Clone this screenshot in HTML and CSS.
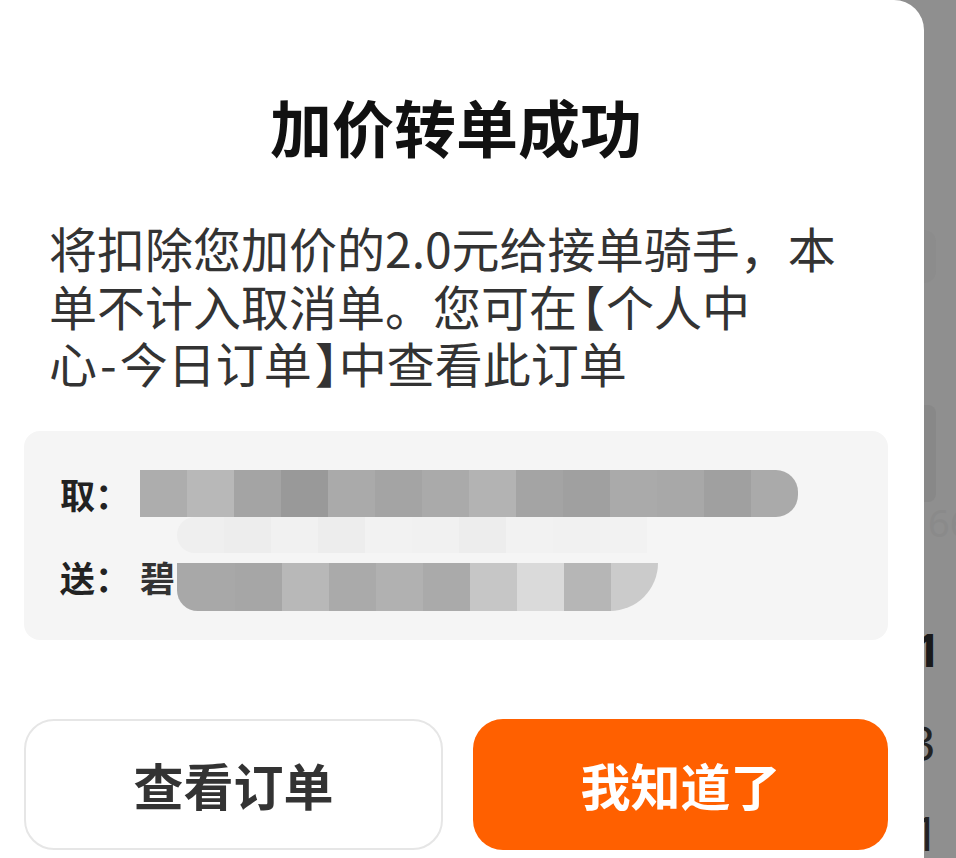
FILE: index.html
```html
<!DOCTYPE html>
<html lang="zh-CN">
<head>
<meta charset="utf-8">
<title>加价转单成功</title>
<link rel="stylesheet" href="styles.css">
</head>
<body>
<div class="screen">
  <div class="dialog">
    <h1 class="title">加价转单成功</h1>
    <p class="desc">将扣除您加价的2.0元给接单骑手，本<br>单不计入取消单。您可在<span class="open">【</span>个人中<br>心<span class="dash">-</span>今日订单<span class="close">】</span>中查看此订单</p>
    <div class="addr">
      <div class="row">
        <span class="label">取：</span>
        <div class="mosaic m1">
          <i class="g1"></i><i class="g2"></i><i class="g3"></i><i class="g4"></i><i class="g5"></i><i class="g3"></i><i class="g5"></i><i class="g6"></i><i class="g3"></i><i class="g7"></i><i class="g5"></i><i class="g8"></i><i class="g7"></i><i class="g5"></i>
        </div>
      </div>
      <div class="band">
        <i class="l1"></i><i class="l2"></i><i class="l3"></i><i class="l2"></i><i class="l4"></i><i class="l3"></i><i class="l2"></i><i class="l4"></i><i class="l3"></i><i class="l4"></i>
      </div>
      <div class="row">
        <span class="label">送：</span>
        <span class="first">碧</span>
        <div class="mosaic m2">
          <i class="wide g8"></i><i class="g9"></i><i class="g2"></i><i class="g5"></i><i class="g10"></i><i class="g5"></i><i class="g11"></i><i class="g12"></i><i class="g13"></i><i class="g14"></i>
        </div>
      </div>
    </div>
    <div class="actions">
      <button class="btn ghost">查看订单</button>
      <button class="btn primary">我知道了</button>
    </div>
  </div>
  <div class="backdrop">
    <div class="bd-circle"></div>
    <div class="bd-card"></div>
    <div class="bd-num faint">66</div>
    <div class="bd-num strong">1</div>
    <div class="bd-num thin three">3</div>
    <div class="bd-num thin one">1</div>
  </div>
</div>
</body>
</html>
```

FILE: styles.css
```css
html, body {
  margin: 0;
  padding: 0;
  height: 100%;
  overflow: hidden;
}
body {
  background: #8f8f8f;
  font-family: "Noto Sans CJK SC", "Noto Sans", sans-serif;
}
.screen {
  display: flex;
  height: 858px;
}
.dialog {
  width: 924px;
  flex: none;
  height: 900px;
  background: #ffffff;
  border-top-right-radius: 30px;
  box-sizing: border-box;
  padding: 89px 36px 0 24px;
  display: flex;
  flex-direction: column;
}
.title {
  margin: 0;
  font-size: 62px;
  line-height: 74px;
  font-weight: 700;
  color: #111111;
  text-align: center;
}
.desc {
  margin: 56px 0 0 25px;
  font-size: 48px;
  line-height: 57.5px;
  color: #333333;
  white-space: nowrap;
}
.open {
  font-feature-settings: "halt" 1;
  margin-left: 4px;
  margin-right: 1px;
}
.close {
  font-feature-settings: "halt" 1;
  margin-left: 3px;
  margin-right: 0;
}
.dash {
  display: inline-block;
  margin: 0 3px;
}
.addr {
  margin-top: 39px;
  background: #f5f5f5;
  border-radius: 16px;
  padding: 39.5px 36px;
  display: flex;
  flex-direction: column;
}
.row {
  height: 47px;
  display: flex;
  align-items: center;
}
.label {
  font-size: 35px;
  font-weight: 700;
  color: #222222;
  width: 80px;
  flex: none;
  line-height: 47px;
}
.first {
  font-size: 35px;
  font-weight: 700;
  color: #333333;
  width: 37px;
  flex: none;
  line-height: 47px;
}
.mosaic {
  display: flex;
  overflow: hidden;
}
.mosaic i {
  display: block;
  width: 47px;
  height: 100%;
  flex: none;
}
.mosaic i.wide {
  width: 58px;
}
.m1 {
  height: 47px;
  border-radius: 0 22px 22px 0;
}
.m2 {
  height: 48px;
  margin-top: 20px;
  border-radius: 0 0 60px 26px;
}
.band {
  height: 36px;
  display: flex;
  padding-left: 117px;
}
.band i {
  display: block;
  width: 47px;
  height: 100%;
  flex: none;
}
.band i:first-child {
  border-radius: 18px 0 0 18px;
}
.g1 { background: #adadad; }
.g2 { background: #b8b8b8; }
.g3 { background: #a4a4a4; }
.g4 { background: #999999; }
.g5 { background: #aaaaaa; }
.g6 { background: #b3b3b3; }
.g7 { background: #a0a0a0; }
.g8 { background: #a8a8a8; }
.g9 { background: #a6a6a6; }
.g10 { background: #b1b1b1; }
.g11 { background: #c6c6c6; }
.g12 { background: #dadada; }
.g13 { background: #b6b6b6; }
.g14 { background: #cbcbcb; }
.l1 { background: #efefef; }
.l2 { background: #ededed; }
.l3 { background: #f1f1f1; }
.l4 { background: #f2f2f2; }
.actions {
  margin-top: 79px;
  display: flex;
  gap: 30px;
}
.btn {
  flex: 1;
  height: 131px;
  border-radius: 30px;
  font-family: "Noto Sans CJK SC", "Noto Sans", sans-serif;
  font-size: 50px;
  font-weight: 700;
  padding: 0;
  cursor: pointer;
}
.ghost {
  background: #ffffff;
  border: 2px solid #e6e6e6;
  color: #333333;
}
.primary {
  background: #ff6000;
  border: none;
  color: #ffffff;
}
.backdrop {
  flex: 1;
  overflow: hidden;
  display: flex;
  flex-direction: column;
  align-items: flex-start;
}
.bd-circle {
  margin-top: 230px;
  width: 12px;
  height: 58px;
  background: #8c8c8c;
  border-radius: 0 30px 30px 0;
}
.bd-card {
  margin-top: 122px;
  width: 12px;
  height: 105px;
  background: #888888;
  border-radius: 0 8px 8px 0;
}
.bd-num {
  font-family: "Noto Sans", "DejaVu Sans", sans-serif;
  white-space: nowrap;
}
.faint {
  margin-top: 0;
  margin-left: 4px;
  font-size: 38px;
  line-height: 40px;
  color: #8a8a8a;
}
.strong {
  margin-top: 82px;
  margin-left: -10px;
  font-size: 46px;
  line-height: 50px;
  font-weight: 700;
  color: #1a1a1a;
}
.thin {
  font-size: 48px;
  line-height: 50px;
  color: #222222;
}
.three {
  margin-top: 44px;
  margin-left: -16px;
}
.one {
  margin-top: 40px;
  margin-left: -12px;
}
```
